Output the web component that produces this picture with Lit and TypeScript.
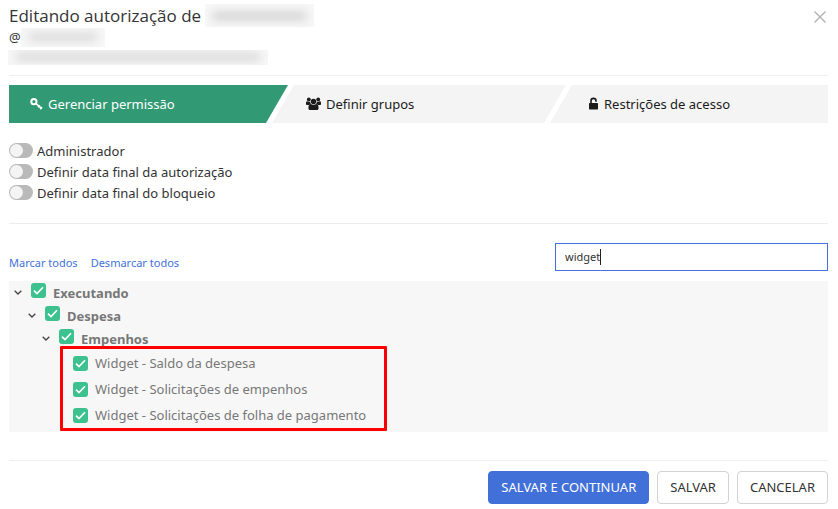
import { LitElement, html, css, svg, nothing, type TemplateResult } from "lit";
import { customElement, property, state } from "lit/decorators.js";
import { classMap } from "lit/directives/class-map.js";

const icons: Record<string, TemplateResult> = {
  key: svg`<circle cx="3.900" cy="4.700" r="2.600" fill="none" stroke="currentColor" stroke-width="2"/>
    <path d="M5.800 6.400L11.800 11.600M8 10.300l1.800-2.100M10.200 12.200l1.800-2.100" fill="none" stroke="currentColor" stroke-width="1.600"/>`,
  users: svg`<circle cx="2.800" cy="2.400" r="1.900"/><circle cx="12.200" cy="2.400" r="1.900"/><circle cx="7.500" cy="4.400" r="2.700"/>
    <path d="M0 7.400V5.800C0 4.700.5 4.200 1.200 4.200c.8.500 2 .6 2.900.2 0 1.100.3 1.900.9 2.600-.9 0-1.500.3-2 .9H1C.4 7.900 0 7.700 0 7.400zM15 7.400V5.800c0-1.100-.5-1.600-1.200-1.600-.8.500-2 .6-2.900.2 0 1.100-.3 1.900-.9 2.600.9 0 1.500.3 2 .9h2c.6 0 1-.2 1-.5z"/>
    <path d="M4.600 7.100c1.700 1 4.100 1 5.800 0 1.500.1 2.200 1.500 2.200 4.100 0 1.200-.7 1.800-1.800 1.800H4.200c-1.100 0-1.800-.6-1.800-1.800 0-2.600.7-4 2.200-4.100z"/>`,
  lock: svg`<rect x="1" y="6" width="9" height="6.500" rx=".7"/>
    <path d="M3 6.500V3.900a2.500 2.500 0 0 1 5 0v.8" fill="none" stroke="currentColor" stroke-width="1.600"/>`,
};

interface Tab { id: string; label: string; icon: string; width: number; }
interface Node { label: string; children?: Node[]; marked?: boolean; }

const tabs: Tab[] = [
  { id: "permission", label: "Gerenciar permissão", icon: "key", width: 13 },
  { id: "groups", label: "Definir grupos", icon: "users", width: 15 },
  { id: "access", label: "Restrições de acesso", icon: "lock", width: 11 },
];

const tree: Node = {
  label: "Executando",
  children: [{
    label: "Despesa",
    children: [{
      label: "Empenhos",
      marked: true,
      children: [
        { label: "Widget - Saldo da despesa" },
        { label: "Widget - Solicitações de empenhos" },
        { label: "Widget - Solicitações de folha de pagamento" },
      ],
    }],
  }],
};

@customElement("toggle-switch")
export class ToggleSwitch extends LitElement {
  @property() label = "";

  static styles = css`
    label { display: flex; align-items: center; gap: 4px; height: 21px; }
    input {
      appearance: none; margin: 0; width: 24px; height: 15px; border-radius: 8px;
      background: #b9b9b9; padding: 1px; display: flex; box-sizing: border-box;
    }
    input::before { content: ""; width: 13px; height: 13px; border-radius: 50%; background: #f4f4f4; }
    input:checked { background: #3dc18f; justify-content: flex-end; }
  `;

  render() {
    return html`<label><input type="checkbox" role="switch" />${this.label}</label>`;
  }
}

@customElement("app-root")
export class AppRoot extends LitElement {
  @state() private active = "permission";

  static styles = css`
    :host {
      display: block; padding: 4px 10px 6px 9px; background: #fff; color: #333;
      font: 13px/20px "Noto Sans", "Open Sans", sans-serif;
    }
    h1, p, ul { margin: 0; padding: 0; font-weight: 400; }
    ul { list-style: none; }
    button { font: inherit; color: inherit; cursor: pointer; }
    header { position: relative; height: 71px; border-bottom: 1px solid #f0f0f0; }
    h1 { display: flex; gap: 4px; font-family: "Open Sans", "Noto Sans", sans-serif; font-size: 17px; line-height: 23px; }
    p { display: flex; align-items: center; height: 20px; }
    .mask { overflow: hidden; display: inline-flex; align-items: center; background: #f7f7f7; }
    .mask::before { content: ""; flex: 1; height: 8px; margin: 0 8px; background: #cfcfcf; filter: blur(5px); }
    .name { width: 109px; height: 23px; }
    .user { width: 84px; height: 19px; }
    .user::before, .mail::before { background: #d8d8d8; }
    .mail { width: 260px; height: 15px; margin-left: -1px; }
    .close { position: absolute; top: 5px; right: 0; width: 16px; height: 16px; padding: 0; border: 0; background: none; display: grid; place-items: center; }
    .close svg { stroke: #b5b5b5; stroke-width: 1.5; }

    nav { display: grid; grid-template-columns: repeat(3, 1fr); margin-top: 9px; }
    .tab { display: flex; align-items: center; gap: 5px; height: 38px; border: 0; background: #f4f4f4; color: #1b1b1b; text-align: left; white-space: nowrap; }
    .tab.on { background: #319a74; color: #fff; }
    .tab:nth-child(1) { margin-right: -6px; padding: 0 21px; clip-path: polygon(0 0, 100% 0, calc(100% - 22px) 100%, 0 100%); }
    .tab:nth-child(2) { margin: 0 -11px 0 -10px; padding: 0 34px; clip-path: polygon(22px 0, 100% 0, calc(100% - 22px) 100%, 0 100%); }
    .tab:nth-child(3) { margin-left: -5px; padding: 0 38px; clip-path: polygon(22px 0, 100% 0, 100% 100%, 0 100%); }
    .tab svg { fill: currentColor; flex: none; }

    .switches { padding: 17px 0 20px; border-bottom: 1px solid #ececec; }
    .tools { display: flex; justify-content: space-between; align-items: flex-end; padding: 19px 0 10px; font-size: 11px; }
    .links { display: flex; gap: 13px; line-height: 16px; }
    a { color: #4272d9; text-decoration: none; }
    .search {
      box-sizing: border-box; width: 33.333%; height: 28px; padding: 0 9px 2px; border: 1px solid #4272d9;
      border-radius: 0; outline: none; color: #333; font: inherit; caret-color: transparent;
      background: linear-gradient(#222, #222) 44px 5px / 1px 16px no-repeat #fff;
    }

    .tree { background: #f7f7f7; color: #777; padding-bottom: 4px; }
    .tree ul ul { padding-left: 14px; }
    .row { display: flex; align-items: center; height: 23px; padding-left: 5px; }
    .row label { display: flex; align-items: center; gap: 7px; white-space: nowrap; }
    .branch label { font-weight: 700; }
    .leaf { height: 26px; padding-left: 22px; }
    .twist { width: 8px; height: 16px; margin-right: 9px; padding: 0; border: 0; background: none; display: grid; place-items: center; }
    .twist svg { fill: none; stroke: #444; stroke-width: 1.3; }
    .check { position: relative; display: grid; place-items: center; }
    .branch .check { margin-bottom: 4px; }
    .check input { appearance: none; grid-area: 1/1; width: 15px; height: 15px; margin: 0; border-radius: 3px; background: #fff; }
    .check input:checked { background: #3dc18f; }
    .check svg { grid-area: 1/1; z-index: 1; fill: none; stroke: #fff; stroke-width: 1.6; pointer-events: none; }
    .marked { position: relative; width: fit-content; }
    .marked::after { content: ""; position: absolute; inset: -4px -21px -3px 23px; border: 3px solid #fb0000; border-radius: 1px; pointer-events: none; }

    footer { display: flex; justify-content: flex-end; gap: 8px; margin-top: 28px; padding-top: 10px; border-top: 1px solid #f0f0f0; }
    .btn { height: 33px; padding: 0 12px 2px; border: 1px solid #d3d3d3; border-radius: 4px; background: #fff; white-space: nowrap; }
    .primary { background: #4070d8; border-color: #4070d8; color: #fff; }
  `;

  private node(n: Node): TemplateResult {
    const branch = !!n.children;
    return html`<li>
      <div class=${classMap({ row: true, branch, leaf: !branch })}>
        ${branch ? html`<button class="twist" aria-label="Recolher ${n.label}">
          <svg width="8" height="5" viewBox="0 0 8 5"><path d="M.7.7L4 4 7.300.7" /></svg></button>` : nothing}
        <label><span class="check"><input type="checkbox" checked />
          <svg width="11" height="9" viewBox="0 0 11 9"><path d="M1 4.600L4 7.600 10 1.200" /></svg></span>${n.label}</label>
      </div>
      ${branch ? html`<ul class=${classMap({ marked: !!n.marked })}>${n.children!.map((c) => this.node(c))}</ul>` : nothing}
    </li>`;
  }

  render() {
    return html`
      <header>
        <h1>Editando autorização de <span class="mask name"></span></h1>
        <p>@<span class="mask user"></span></p>
        <p><span class="mask mail"></span></p>
        <button class="close" aria-label="Fechar"><svg width="12" height="12" viewBox="0 0 12 12"><path d="M.5.5l11 11M11.500.5l-11 11" /></svg></button>
      </header>
      <nav>
        ${tabs.map((t) => html`<button class=${classMap({ tab: true, on: t.id === this.active })} @click=${() => (this.active = t.id)}>
          <svg width=${t.width} height="14" viewBox="0 0 ${t.width} 14">${icons[t.icon]}</svg>${t.label}</button>`)}
      </nav>
      <section class="switches">
        <toggle-switch label="Administrador"></toggle-switch>
        <toggle-switch label="Definir data final da autorização"></toggle-switch>
        <toggle-switch label="Definir data final do bloqueio"></toggle-switch>
      </section>
      <div class="tools">
        <div class="links"><a href="#">Marcar todos</a><a href="#">Desmarcar todos</a></div>
        <input class="search" type="text" aria-label="Pesquisar" value="widget" />
      </div>
      <div class="tree"><ul>${this.node(tree)}</ul></div>
      <footer>
        <button class="btn primary">SALVAR E CONTINUAR</button>
        <button class="btn">SALVAR</button>
        <button class="btn">CANCELAR</button>
      </footer>`;
  }
}
